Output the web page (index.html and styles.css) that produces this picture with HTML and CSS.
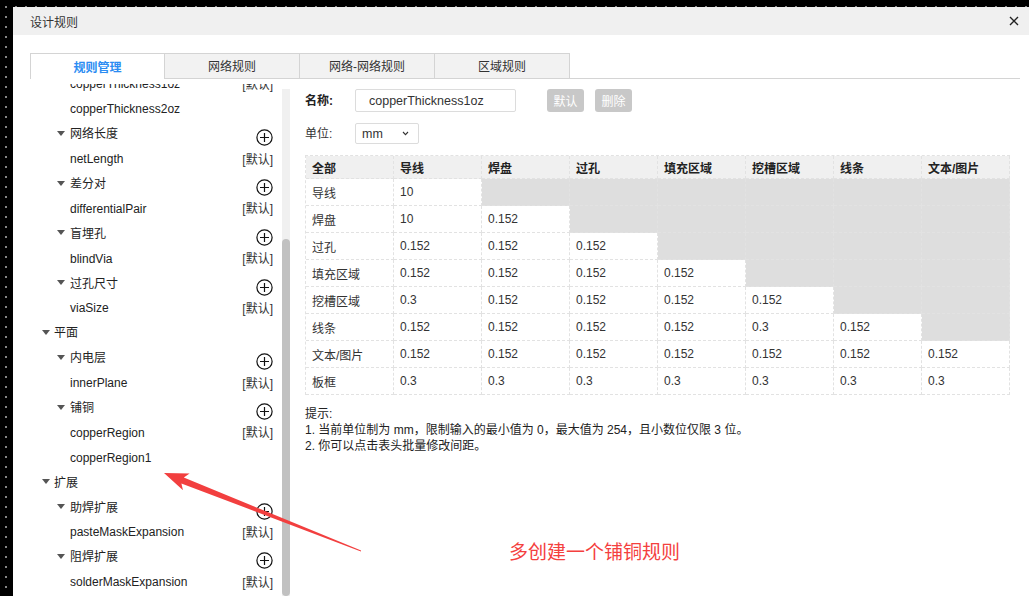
FILE: index.html
```html
<!DOCTYPE html>
<html lang="zh-CN">
<head>
<meta charset="utf-8">
<title>设计规则</title>
<link rel="stylesheet" href="styles.css">
</head>
<body>
<div class="dialog">
  <div class="titlebar">
    <span class="title">设计规则</span>
    <svg class="close" viewBox="0 0 10 10" width="10" height="10"><path d="M1 1 L9 9 M9 1 L1 9" stroke="#222" stroke-width="1.4" fill="none"/></svg>
  </div>
  <div class="body">
    <div class="tabs">
      <div class="tab active">规则管理</div>
      <div class="tab">网络规则</div>
      <div class="tab">网络-网络规则</div>
      <div class="tab">区域规则</div>
    </div>
    <div class="main">
      <div class="tree-pane">
        <div class="tree">
          <div class="tree-inner">
            <div class="row leaf"><span class="label">copperThickness1oz</span><span class="def">[默认]</span></div>
            <div class="row leaf"><span class="label">copperThickness2oz</span></div>
            <div class="row cat2"><i class="caret"></i><span class="label">网络长度</span><svg class="plus" viewBox="0 0 17 17"><circle cx="8.5" cy="8.5" r="7.6"/><path d="M4 8.5 H13 M8.5 4 V13"/></svg></div>
            <div class="row leaf"><span class="label">netLength</span><span class="def">[默认]</span></div>
            <div class="row cat2"><i class="caret"></i><span class="label">差分对</span><svg class="plus" viewBox="0 0 17 17"><circle cx="8.5" cy="8.5" r="7.6"/><path d="M4 8.5 H13 M8.5 4 V13"/></svg></div>
            <div class="row leaf"><span class="label">differentialPair</span><span class="def">[默认]</span></div>
            <div class="row cat2"><i class="caret"></i><span class="label">盲埋孔</span><svg class="plus" viewBox="0 0 17 17"><circle cx="8.5" cy="8.5" r="7.6"/><path d="M4 8.5 H13 M8.5 4 V13"/></svg></div>
            <div class="row leaf"><span class="label">blindVia</span><span class="def">[默认]</span></div>
            <div class="row cat2"><i class="caret"></i><span class="label">过孔尺寸</span><svg class="plus" viewBox="0 0 17 17"><circle cx="8.5" cy="8.5" r="7.6"/><path d="M4 8.5 H13 M8.5 4 V13"/></svg></div>
            <div class="row leaf"><span class="label">viaSize</span><span class="def">[默认]</span></div>
            <div class="row cat1"><i class="caret"></i><span class="label">平面</span></div>
            <div class="row cat2"><i class="caret"></i><span class="label">内电层</span><svg class="plus" viewBox="0 0 17 17"><circle cx="8.5" cy="8.5" r="7.6"/><path d="M4 8.5 H13 M8.5 4 V13"/></svg></div>
            <div class="row leaf"><span class="label">innerPlane</span><span class="def">[默认]</span></div>
            <div class="row cat2"><i class="caret"></i><span class="label">铺铜</span><svg class="plus" viewBox="0 0 17 17"><circle cx="8.5" cy="8.5" r="7.6"/><path d="M4 8.5 H13 M8.5 4 V13"/></svg></div>
            <div class="row leaf"><span class="label">copperRegion</span><span class="def">[默认]</span></div>
            <div class="row leaf"><span class="label">copperRegion1</span></div>
            <div class="row cat1"><i class="caret"></i><span class="label">扩展</span></div>
            <div class="row cat2"><i class="caret"></i><span class="label">助焊扩展</span><svg class="plus" viewBox="0 0 17 17"><circle cx="8.5" cy="8.5" r="7.6"/><path d="M4 8.5 H13 M8.5 4 V13"/></svg></div>
            <div class="row leaf"><span class="label">pasteMaskExpansion</span><span class="def">[默认]</span></div>
            <div class="row cat2"><i class="caret"></i><span class="label">阻焊扩展</span><svg class="plus" viewBox="0 0 17 17"><circle cx="8.5" cy="8.5" r="7.6"/><path d="M4 8.5 H13 M8.5 4 V13"/></svg></div>
            <div class="row leaf"><span class="label">solderMaskExpansion</span><span class="def">[默认]</span></div>
          </div>
        </div>
        <div class="scrollbar"><div class="thumb"></div></div>
      </div>
      <div class="rules">
        <div class="form-row">
          <span class="flabel strong">名称:</span>
          <div class="input">copperThickness1oz</div>
          <span class="btn first">默认</span>
          <span class="btn">删除</span>
        </div>
        <div class="form-row">
          <span class="flabel">单位:</span>
          <div class="select"><span>mm</span><svg class="chev" viewBox="0 0 7 5" width="7" height="5"><path d="M1 1 L3.5 3.6 L6 1" stroke="#333" stroke-width="1.1" fill="none"/></svg></div>
        </div>
        <div class="grid">
          <div class="c h">全部</div><div class="c h">导线</div><div class="c h">焊盘</div><div class="c h">过孔</div><div class="c h">填充区域</div><div class="c h">挖槽区域</div><div class="c h">线条</div><div class="c h">文本/图片</div>

          <div class="c">导线</div><div class="c">10</div><div class="c g"></div><div class="c g"></div><div class="c g"></div><div class="c g"></div><div class="c g"></div><div class="c g"></div>

          <div class="c">焊盘</div><div class="c">10</div><div class="c">0.152</div><div class="c g"></div><div class="c g"></div><div class="c g"></div><div class="c g"></div><div class="c g"></div>

          <div class="c">过孔</div><div class="c">0.152</div><div class="c">0.152</div><div class="c">0.152</div><div class="c g"></div><div class="c g"></div><div class="c g"></div><div class="c g"></div>

          <div class="c">填充区域</div><div class="c">0.152</div><div class="c">0.152</div><div class="c">0.152</div><div class="c">0.152</div><div class="c g"></div><div class="c g"></div><div class="c g"></div>

          <div class="c">挖槽区域</div><div class="c">0.3</div><div class="c">0.152</div><div class="c">0.152</div><div class="c">0.152</div><div class="c">0.152</div><div class="c g"></div><div class="c g"></div>

          <div class="c">线条</div><div class="c">0.152</div><div class="c">0.152</div><div class="c">0.152</div><div class="c">0.152</div><div class="c">0.3</div><div class="c">0.152</div><div class="c g"></div>

          <div class="c">文本/图片</div><div class="c">0.152</div><div class="c">0.152</div><div class="c">0.152</div><div class="c">0.152</div><div class="c">0.152</div><div class="c">0.152</div><div class="c">0.152</div>

          <div class="c">板框</div><div class="c">0.3</div><div class="c">0.3</div><div class="c">0.3</div><div class="c">0.3</div><div class="c">0.3</div><div class="c">0.3</div><div class="c">0.3</div>
        </div>
        <div class="notes">
          <p>提示:</p>
          <p>1. 当前单位制为 mm，限制输入的最小值为 0，最大值为 254，且小数位仅限 3 位。</p>
          <p>2. 你可以点击表头批量修改间距。</p>
        </div>
      </div>
    </div>
  </div>
</div>
<svg class="annot" viewBox="0 0 1029 596" width="1029" height="596">
  <polygon points="164,473 189.6,473.4 183.8,477.4 361.1,550.6 360.9,551.4 181.4,483.4 183,490.2" fill="#f23f3f"/>
</svg>
<div class="annot-text">多创建一个铺铜规则</div>
</body>
</html>
```
FILE: styles.css
```css
* { box-sizing: border-box; }
html, body { margin: 0; height: 100%; }
body {
  position: relative;
  overflow: hidden;
  background-color: #000;
  background-image: radial-gradient(circle, #8a8a8a 0.7px, transparent 1.1px);
  background-size: 10px 10px;
  background-position: 1px 2px;
  font-family: "Liberation Sans", "Noto Sans CJK SC", sans-serif;
  font-size: 12px;
  color: #333;
}
.dialog {
  margin: 7px 0 0 13px;
  width: 1016px;
  height: 589px;
  background: #fff;
  display: flex;
  flex-direction: column;
}
.titlebar {
  flex: none;
  height: 28px;
  background: #f0f0f0;
  display: flex;
  align-items: center;
  justify-content: space-between;
  padding: 0 10px 0 17px;
}
.title { font-size: 12px; line-height: 16px; color: #333; margin-top: 4px; }
.close { display: block; width: 10px; height: 10px; }
.body {
  flex: 1;
  min-height: 0;
  display: flex;
  flex-direction: column;
  padding: 18px 9px 0 17px;
}
.tabs {
  flex: none;
  display: flex;
  align-items: flex-start;
  height: 26px;
  border-bottom: 1px solid #d4d4d4;
}
.tab {
  width: 135px;
  height: 25px;
  display: flex;
  align-items: center;
  justify-content: center;
  background: #f2f2f2;
  border: 1px solid #d4d4d4;
  border-left: none;
  border-bottom: none;
  font-size: 12px;
  line-height: 16px;
  padding-top: 2px;
  color: #333;
}
.tab:first-child { border-left: 1px solid #d4d4d4; }
.tab.active {
  background: #fff;
  color: #2b8cf2;
  font-weight: bold;
  height: 26px;
  margin-bottom: -1px;
}
.main { flex: 1; min-height: 0; display: flex; }
.tree-pane { flex: none; width: 260px; display: flex; margin-top: 5px; }
.tree { flex: 1; overflow: hidden; padding-right: 9px; }
.tree-inner { margin-top: -12px; }
.row {
  height: 24.9px;
  display: flex;
  align-items: center;
  line-height: 16px;
  color: #222;
  white-space: nowrap;
}
.row .label { flex: 1; }
.row.leaf { padding-left: 40px; }
.row.cat1 { padding-left: 12px; }
.row.cat2 { padding-left: 27px; }
.caret {
  width: 0;
  height: 0;
  border-left: 4px solid transparent;
  border-right: 4px solid transparent;
  border-top: 5px solid #555;
  margin: -2px 5px 0 0;
}
.cat1 .caret { margin-right: 4px; }
.def { color: #333; margin-top: 1px; }
.plus {
  width: 17px;
  height: 17px;
  margin-top: 7px;
  fill: none;
  stroke: #111;
  stroke-width: 1.2;
}
.scrollbar {
  flex: none;
  width: 8px;
  margin-top: 5px;
  background: #f0f0f0;
  display: flex;
  flex-direction: column;
}
.thumb {
  margin-top: 150px;
  height: 362px;
  background: #c1c1c1;
  border-radius: 4px;
}
.rules { flex: 1; margin-left: 15px; padding-top: 10px; }
.form-row { display: flex; align-items: center; }
.form-row + .form-row { margin-top: 11px; }
.flabel { width: 50px; font-size: 12px; line-height: 16px; color: #333; }
.flabel.strong { font-weight: bold; color: #222; }
.input {
  width: 161px;
  height: 23px;
  border: 1px solid #dcdcdc;
  border-radius: 2px;
  padding-left: 13px;
  display: flex;
  align-items: center;
  font-size: 12.5px;
  color: #333;
}
.btn {
  width: 37px;
  height: 23px;
  background: #c8c8c8;
  color: #fff;
  border-radius: 3px;
  display: flex;
  align-items: center;
  justify-content: center;
  font-size: 12px;
  margin-left: 11px;
}
.btn.first { margin-left: 31px; }
.select {
  width: 64px;
  height: 21px;
  border: 1px solid #dcdcdc;
  border-radius: 2px;
  display: flex;
  align-items: center;
  justify-content: space-between;
  padding: 0 9px 0 6px;
  font-size: 12.5px;
  color: #333;
}
.chev { display: block; }
.grid {
  margin-top: 11px;
  display: grid;
  grid-template-columns: repeat(8, 88px);
  grid-template-rows: 23px;
  grid-auto-rows: 27px;
  width: 705px;
  border-top: 1px dashed #e2e2e2;
  border-left: 1px dashed #e2e2e2;
}
.c {
  border-right: 1px dashed #e2e2e2;
  border-bottom: 1px dashed #e2e2e2;
  padding-left: 6px;
  display: flex;
  align-items: center;
  font-size: 12px;
  color: #333;
  white-space: nowrap;
}
.c.h {
  background: #f0f0f0;
  font-weight: bold;
  color: #222;
}
.c.g { background: #dedede; }
.notes { margin-top: 11px; }
.notes p { margin: 0; font-size: 12px; line-height: 16px; color: #222; }
.annot {
  position: absolute;
  left: 0;
  top: 0;
  pointer-events: none;
}
.annot-text {
  position: absolute;
  left: 509px;
  top: 541px;
  font-family: "Noto Sans CJK SC", sans-serif;
  font-size: 19px;
  line-height: 20px;
  color: #f4403e;
  white-space: nowrap;
}
```
